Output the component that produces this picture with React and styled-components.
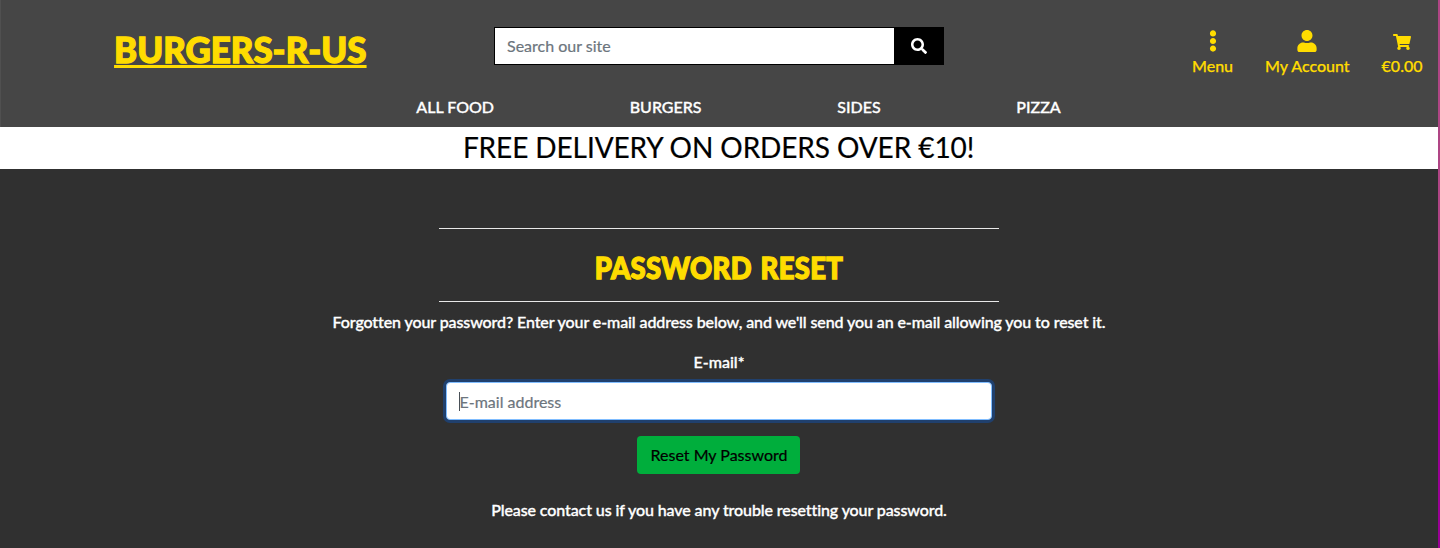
import React from "react";
import styled, { createGlobalStyle } from "styled-components";
import { FaSearch, FaEllipsisV, FaUser, FaShoppingCart } from "react-icons/fa";

const GlobalStyle = createGlobalStyle`
  *, *::before, *::after { box-sizing: border-box; }
  body {
    margin: 0;
    background: #303030;
    color: #fff;
    font: 400 16px/24px Lato, sans-serif;
    overflow: hidden;
  }
`;

const Frame = styled.div`
  display: grid;
  grid-template-columns: 1438px 2px;
  height: 548px;
`;

const Edge = styled.div`
  background: linear-gradient(#b04585 0, #b04585 330px, #9a0096 390px, #9a0096 100%);
`;

const Page = styled.div`
  min-width: 0;
`;

const Header = styled.header`
  height: 127px;
  border-left: 1px solid #505050;
  background: #464646;
`;

const TopBar = styled.div`
  display: grid;
  grid-template-columns: 478px 481px 1fr;
  height: 92px;
`;

const Logo = styled.a`
  justify-self: center;
  margin-top: 26px;
  height: 42px;
  color: #ffdc00;
  font-size: 36px;
  font-weight: 900;
  line-height: 46px;
  white-space: nowrap;
  text-decoration: underline;
  text-decoration-thickness: 3px;
  text-underline-offset: 2px;
  text-decoration-skip-ink: none;
  transform: scaleX(0.969);
  -webkit-text-stroke: 1.3px #ffdc00;
`;

const Search = styled.form`
  display: flex;
  width: 450px;
  height: 38px;
  margin: 27px 0 0 15px;
`;

const SearchInput = styled.input`
  width: 401px;
  padding: 6px 12px;
  border: 1px solid #000;
  border-radius: 0;
  outline: 0;
  background: #fff;
  font: inherit;
  &::placeholder {
    color: #6c757d;
    opacity: 1;
    -webkit-text-stroke: 0.2px #6c757d;
  }
`;

const SearchButton = styled.button`
  display: flex;
  align-items: center;
  justify-content: center;
  width: 49px;
  padding: 0 2px 0 0;
  border: 0;
  background: #000;
  color: #fff;
  font-size: 16px;
`;

const Actions = styled.nav`
  display: flex;
  justify-content: flex-end;
  gap: 32px;
  padding: 29px 15.5px 0 0;
`;

const Action = styled.a`
  display: flex;
  flex-direction: column;
  align-items: center;
  color: #ffdc00;
  font-weight: 500;
  white-space: nowrap;
  -webkit-text-stroke: 0.25px #ffdc00;
`;

const ActionIcon = styled.span`
  display: flex;
  align-items: center;
  height: 25px;
  padding-bottom: ${(p) => p.$lift}px;
  font-size: ${(p) => p.$size}px;
`;

const Categories = styled.nav`
  display: flex;
  justify-content: center;
  gap: 135.7px;
  padding: 3px 0 0 38px;
  font-weight: 500;
  -webkit-text-stroke: 0.35px #fff;
`;

const Category = styled.a`
  color: #fff;
`;

const Banner = styled.div`
  height: 42px;
  padding-right: 1px;
  background: #fff;
  color: #000;
  text-align: center;
  font-size: 28px;
  line-height: 41px;
  letter-spacing: -0.09px;
  -webkit-text-stroke: 0.2px #000;
`;

const Main = styled.main`
  display: flex;
  flex-direction: column;
  align-items: center;
  padding-top: 59px;
`;

const TitleBlock = styled.div`
  width: 560px;
  height: 74px;
  border-top: 1px solid #e8e8e8;
  border-bottom: 1px solid #e8e8e8;
  text-align: center;
`;

const Title = styled.h1`
  margin: 0;
  color: #ffdc00;
  font-size: 30px;
  font-weight: 900;
  line-height: 76px;
  letter-spacing: 0.4px;
  word-spacing: 2px;
  transform: scaleX(0.912);
  -webkit-text-stroke: 1.4px #ffdc00;
`;

const Text = styled.p`
  margin: ${(p) => p.$top}px 0 0;
  font-weight: 500;
  letter-spacing: -0.1px;
  white-space: nowrap;
  -webkit-text-stroke: 0.35px #fff;
`;

const Form = styled.form`
  display: flex;
  flex-direction: column;
  align-items: center;
  margin-top: 16px;
`;

const Label = styled.label`
  font-weight: 500;
  -webkit-text-stroke: 0.35px #fff;
`;

const Field = styled.div`
  display: flex;
  align-items: center;
  width: 546px;
  height: 38px;
  margin-top: 8px;
  padding: 1px 12px 0;
  border: 1px solid #80bdff;
  border-radius: 4px;
  background: #fff;
  box-shadow: 0 0 0 3px rgba(15, 80, 170, 0.5);
  color: #6c757d;
  -webkit-text-stroke: 0.2px #6c757d;
`;

const Caret = styled.span`
  width: 1px;
  height: 19px;
  margin-right: -0.5px;
  background: #495057;
`;

const Submit = styled.button`
  width: 163px;
  height: 38px;
  margin: 16px 1px 0 0;
  padding: 0 0 0 1px;
  border: 0;
  border-radius: 4px;
  background: #00ae3c;
  color: #000;
  font: inherit;
  -webkit-text-stroke: 0.2px #000;
`;

const actions = [
  { label: "Menu", Icon: FaEllipsisV, size: 22, lift: 2 },
  { label: "My Account", Icon: FaUser, size: 22, lift: 2 },
  { label: "€0.00", Icon: FaShoppingCart, size: 18, lift: 0 },
];

export default function App() {
  return (
    <>
      <GlobalStyle />
      <Frame>
        <Page>
          <Header>
            <TopBar>
              <Logo>BURGERS-R-US</Logo>
              <Search>
                <SearchInput placeholder="Search our site" />
                <SearchButton type="button" aria-label="Search"><FaSearch /></SearchButton>
              </Search>
              <Actions>
                {actions.map(({ label, Icon, size, lift }) => (
                  <Action key={label}>
                    <ActionIcon $size={size} $lift={lift}><Icon /></ActionIcon>
                    {label}
                  </Action>
                ))}
              </Actions>
            </TopBar>
            <Categories>
              {["ALL FOOD", "BURGERS", "SIDES", "PIZZA"].map((name) => (
                <Category key={name}>{name}</Category>
              ))}
            </Categories>
          </Header>
          <Banner>FREE DELIVERY ON ORDERS OVER €10!</Banner>
          <Main>
            <TitleBlock><Title>PASSWORD RESET</Title></TitleBlock>
            <Text $top={8}>
              Forgotten your password? Enter your e-mail address below, and we'll send you an e-mail allowing you to reset it.
            </Text>
            <Form>
              <Label>E-mail*</Label>
              <Field><Caret />E-mail address</Field>
              <Submit type="button">Reset My Password</Submit>
            </Form>
            <Text $top={24}>Please contact us if you have any trouble resetting your password.</Text>
          </Main>
        </Page>
        <Edge />
      </Frame>
    </>
  );
}
